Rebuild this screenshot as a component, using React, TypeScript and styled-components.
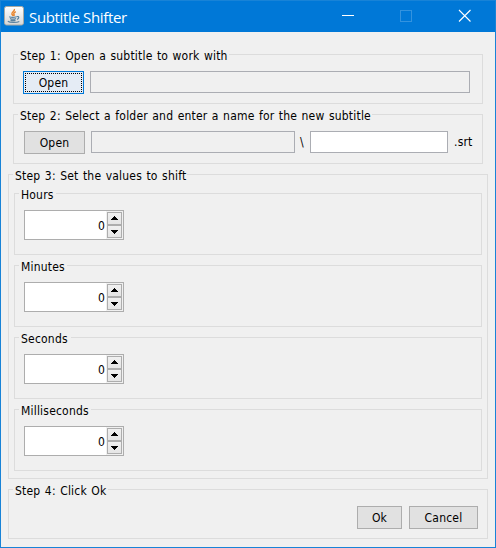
import React from "react";
import styled, { createGlobalStyle, css } from "styled-components";

const GlobalStyle = createGlobalStyle`
  * { box-sizing: border-box; }
  body {
    margin: 0;
    background: #f0f0f0;
    color: #000;
    font-family: "DejaVu Sans Condensed", "DejaVu Sans", sans-serif;
    font-stretch: condensed;
    font-size: 12px;
    letter-spacing: 0.2px;
    word-spacing: 0.8px;
  }
`;

const Window = styled.div`
  width: 496px;
  height: 548px;
  border: 1px solid #1883d7;
  background: #f0f0f0;
  display: flex;
  flex-direction: column;
`;

const TitleBar = styled.header`
  height: 31px;
  flex: none;
  background: #0078d7;
  color: #fff;
  display: flex;
  align-items: center;
  padding-left: 3px;
`;

const Title = styled.h1`
  margin: 0 0 0 5px;
  flex: 1;
  font: 400 15px/20px "Open Sans", sans-serif;
  letter-spacing: -0.35px;
  word-spacing: 0;
  white-space: nowrap;
`;

const WindowControls = styled.div`
  display: flex;
  height: 31px;
  margin-right: 1px;
  svg { display: block; }
`;

const Content = styled.main`
  display: flex;
  flex-direction: column;
  padding: 22px 7px 0;
`;

const Group = styled.section<{ $h: number; $gap?: number; $inset?: number }>`
  height: ${(p) => p.$h}px;
  margin: 0 ${(p) => p.$inset ?? 0}px ${(p) => p.$gap ?? 0}px ${(p) => p.$inset ?? 0}px;
  border: 1px solid #dcdcdc;
  flex: none;
`;

const Legend = styled.h2<{ $w: number }>`
  margin: -7px 0 0 4px;
  padding-left: 2px;
  width: ${(p) => p.$w}px;
  height: 14px;
  background: #f0f0f0;
  font-size: 12px;
  font-weight: 400;
  line-height: 17px;
  white-space: nowrap;
`;

const Row = styled.div<{ $left: number }>`
  display: flex;
  align-items: flex-start;
  margin-top: 9px;
  padding-left: ${(p) => p.$left}px;
`;

const Actions = styled(Row)`
  justify-content: flex-end;
  gap: 7px;
  padding-right: 9px;
`;

const UnitList = styled.div`
  width: 468px;
  margin: 11px 0 0 5px;
`;

const Button = styled.button<{ $w: number; $focused?: boolean }>`
  width: ${(p) => p.$w}px;
  height: 23px;
  padding: 1px 0 0;
  border: 1px solid #adadad;
  background: #e1e1e1;
  color: #000;
  font: inherit;
  letter-spacing: inherit;
  line-height: 20px;
  ${(p) =>
    p.$focused &&
    css`
      border-color: #0078d7;
      background: #e5ecf5;
      outline: 1px dotted #000;
      outline-offset: -3px;
    `}
`;

const Field = styled.input<{ $w: number }>`
  width: ${(p) => p.$w}px;
  height: 22px;
  margin-left: 6px;
  padding: 0 2px;
  border: 1px solid #abadb3;
  border-radius: 0;
  background: #fff;
  font: inherit;
  outline: none;
  &:read-only { background: #f0f0f0; }
`;

const PathText = styled.span<{ $w: number; $gap: number }>`
  width: ${(p) => p.$w}px;
  margin-left: ${(p) => p.$gap}px;
  line-height: 23px;
  white-space: nowrap;
`;

const SpinnerBox = styled.div`
  display: flex;
  width: 100px;
  height: 30px;
  border: 1px solid #adadad;
  background: #f0f0f0;
`;

const SpinnerValue = styled.div`
  width: 81px;
  padding-right: 1px;
  background: #fff;
  text-align: right;
  line-height: 30px;
`;

const SpinnerButtons = styled.div`
  display: flex;
  flex-direction: column;
  margin: 1px 0 0 1px;
`;

const Step = styled.button`
  display: block;
  width: 15px;
  height: 13px;
  padding: 0;
  border: 1px solid #adadad;
  background: linear-gradient(#f0f0f0, #e5e5e5);
  svg { display: block; }
`;

const AppIcon = styled.svg`
  display: block;
  margin-top: -1px;
`;

function JavaIcon() {
  return (
    <AppIcon width="20" height="20" viewBox="0 0 20 20">
      <defs>
        <linearGradient id="tile" x1="0" y1="0" x2="0" y2="1">
          <stop offset="0" stopColor="#fff" />
          <stop offset="1" stopColor="#d6d6d6" />
        </linearGradient>
      </defs>
      <rect x="0.5" y="0.5" width="19" height="18.5" rx="2" fill="url(#tile)" stroke="#a9a9a3" />
      <path d="M10.400 3c.8 2-3 2.900-2.500 5 .2.800 1 1.200 1.300 2M11.800 5.700c-1.800 1-2.700 1.700-1.700 2.800.4.600.1 1-.4 1.400" fill="none" stroke="#e8842c" strokeWidth="1.400" />
      <path d="M5.200 10.700c1.500.6 5.500.6 7.300 0M6 12.500c1.600.6 4.500.6 6 0M6.500 14.100c1.400.5 3.700.5 5 0M3.800 15.300c2 1.400 9 1.500 11.500.2M12.700 10.600c2.700-.7 2.700 2 .2 2.700" fill="none" stroke="#5a82a0" strokeWidth="1.200" />
    </AppIcon>
  );
}

const upArrow = "M6 3h1v1h1v1h1v1h1v1H3V6h1V5h1V4h1z";
const downArrow = "M3 4h7v1H9v1H8v1H7v1H6V7H5V6H4V5H3z";

function Spinner({ label }: { label: string }) {
  return (
    <SpinnerBox role="spinbutton" aria-label={label}>
      <SpinnerValue>0</SpinnerValue>
      <SpinnerButtons>
        {[upArrow, downArrow].map((d) => (
          <Step key={d} aria-label={d === upArrow ? "Increase" : "Decrease"}>
            <svg width="13" height="11" shapeRendering="crispEdges"><path d={d} /></svg>
          </Step>
        ))}
      </SpinnerButtons>
    </SpinnerBox>
  );
}

const units = [
  { name: "Hours", width: 37 },
  { name: "Minutes", width: 48 },
  { name: "Seconds", width: 52 },
  { name: "Milliseconds", width: 72 },
];

export default function App() {
  return (
    <>
      <GlobalStyle />
      <Window>
        <TitleBar>
          <JavaIcon />
          <Title>Subtitle Shifter</Title>
          <WindowControls>
            <svg width="154" height="31" fill="none">
              <path d="M2 14.500h12" stroke="#fff" shapeRendering="crispEdges" />
              <path d="M60.500 9.500h11v11h-11z" stroke="#3393df" shapeRendering="crispEdges" />
              <path d="M119 9l11.500 11.500M130.500 9L119 20.500" stroke="#fff" strokeWidth="1.100" />
            </svg>
          </WindowControls>
        </TitleBar>
        <Content>
          <Group $h={50} $gap={10} $inset={5}>
            <Legend $w={211}>Step 1: Open a subtitle to work with</Legend>
            <Row $left={9}>
              <Button $w={61} $focused>Open</Button>
              <Field $w={380} readOnly aria-label="Subtitle path" />
            </Row>
          </Group>
          <Group $h={50} $gap={10} $inset={5}>
            <Legend $w={354}>Step 2: Select a folder and enter a name for the new subtitle</Legend>
            <Row $left={10}>
              <Button $w={61}>Open</Button>
              <Field $w={204} readOnly aria-label="Folder" />
              <PathText $w={4} $gap={5}>\</PathText>
              <Field $w={138} aria-label="File name" />
              <PathText $w={20} $gap={6}>.srt</PathText>
            </Row>
          </Group>
          <Group $h={305} $gap={10}>
            <Legend $w={174}>Step 3: Set the values to shift</Legend>
            <UnitList>
              {units.map((u) => (
                <Group key={u.name} $h={62} $gap={10}>
                  <Legend $w={u.width}>{u.name}</Legend>
                  <Row $left={9}>
                    <Spinner label={u.name} />
                  </Row>
                </Group>
              ))}
            </UnitList>
          </Group>
          <Group $h={50}>
            <Legend $w={95}>Step 4: Click Ok</Legend>
            <Actions $left={0}>
              <Button $w={45}>Ok</Button>
              <Button $w={69}>Cancel</Button>
            </Actions>
          </Group>
        </Content>
      </Window>
    </>
  );
}
